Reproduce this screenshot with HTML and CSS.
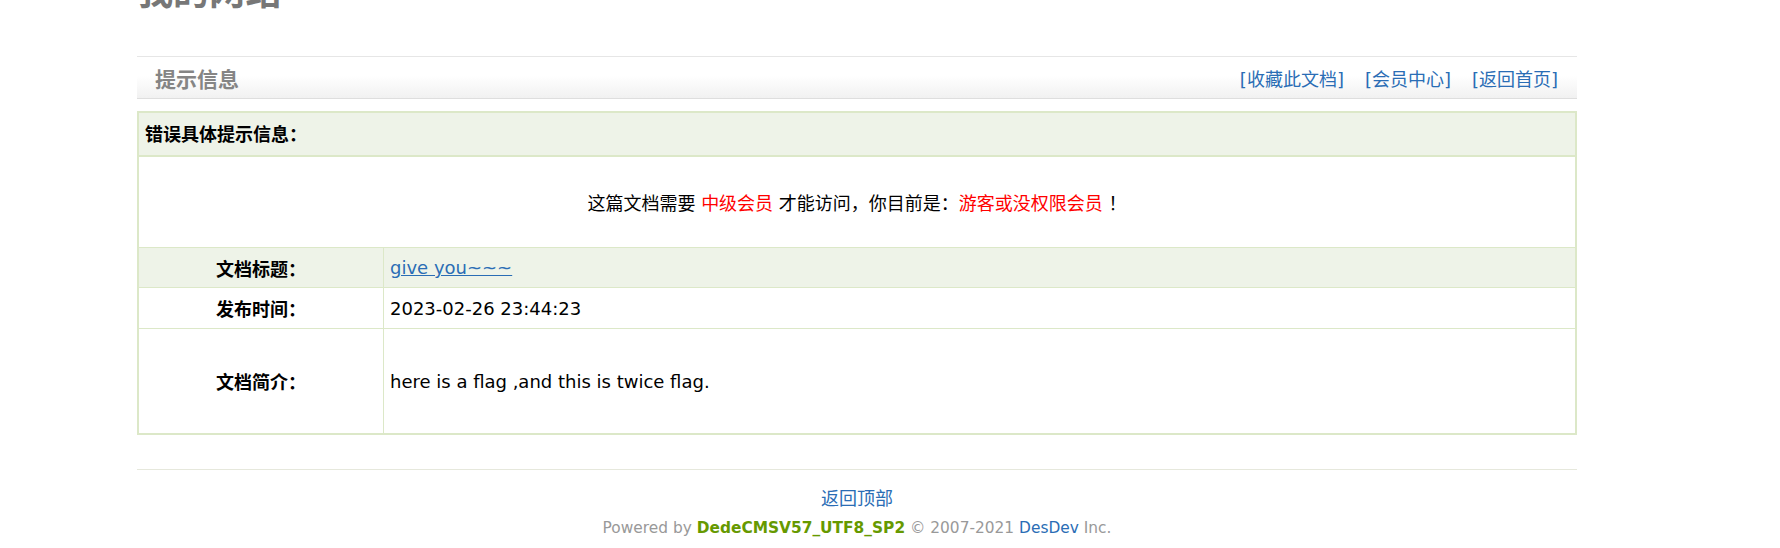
FILE: index.html
```html
<!DOCTYPE html>
<html lang="zh-CN">
<head>
<meta charset="utf-8">
<title>提示信息 - 我的网站</title>
<link rel="stylesheet" href="styles.css">
</head>
<body>
<div class="page">
  <h1 class="site-title">我的网站</h1>
  <div class="bar">
    <strong class="bar-title">提示信息</strong>
    <nav class="bar-links">
      <a href="#">[收藏此文档]</a>
      <a href="#">[会员中心]</a>
      <a href="#">[返回首页]</a>
    </nav>
  </div>
  <table class="info">
    <tr class="head"><td colspan="2">错误具体提示信息：</td></tr>
    <tr class="msg"><td colspan="2">这篇文档需要 <span class="red">中级会员</span> 才能访问，你目前是：<span class="red">游客或没权限会员</span> ！</td></tr>
    <tr class="alt"><th>文档标题：</th><td><a href="#" class="ul">give you~~~</a></td></tr>
    <tr class="date"><th>发布时间：</th><td>2023-02-26 23:44:23</td></tr>
    <tr class="desc"><th>文档简介：</th><td>here is a flag ,and this is twice flag.</td></tr>
  </table>
  <div class="footer">
    <a href="#" class="top">返回顶部</a>
    <p class="powered">Powered by <a href="#" class="dede">DedeCMSV57_UTF8_SP2</a> © 2007-2021 <a href="#">DesDev</a> Inc.</p>
  </div>
</div>
</body>
</html>
```
FILE: styles.css
```css
html, body {
  margin: 0;
  padding: 0;
  background: #fff;
}
body {
  font-family: "DejaVu Sans", "Noto Sans CJK SC", sans-serif;
  font-size: 18px;
  color: #000;
}
a {
  color: #2a6db5;
  text-decoration: none;
}
.page {
  width: 1440px;
  margin: 0 0 0 137px;
}
.site-title {
  margin: -31px 0 0 0;
  height: 40px;
  line-height: 40px;
  font-size: 36px;
  font-weight: bold;
  color: #777;
  font-family: "Noto Sans CJK SC", sans-serif;
}
.bar {
  margin-top: 47px;
  height: 41px;
  border-top: 1px solid #e6e6e6;
  border-bottom: 1px solid #dedede;
  background: linear-gradient(#fff 45%, #f1f1f1);
  display: flex;
  align-items: center;
  justify-content: space-between;
  padding: 0 19px 0 18px;
}
.bar-title {
  font-family: "Noto Sans CJK SC", sans-serif;
  font-size: 21px;
  color: #858585;
}
.bar-links {
  display: flex;
  gap: 21px;
}
.bar-links a {
  font-size: 18px;
}
.info {
  margin-top: 12px;
  width: 100%;
  border-collapse: collapse;
  border: 2px solid #dce8c8;
}
.info td, .info th {
  border: 1px solid #dce8c8;
  padding: 0 6px;
}
.info th {
  width: 232px;
  text-align: center;
  font-weight: bold;
}
.head td {
  height: 40px;
  padding-bottom: 2px;
  background: #eef3e8;
  font-weight: bold;
  border-bottom-width: 2px;
}
.msg td {
  height: 90px;
  text-align: center;
}
.alt th, .alt td {
  height: 39px;
  background: #eef3e8;
}
.date th, .date td {
  height: 40px;
}
.desc th, .desc td {
  height: 104px;
}
.red {
  color: #ff0000;
}
a.ul {
  text-decoration: underline;
}
.footer {
  margin-top: 34px;
  border-top: 1px solid #e6e8dc;
  text-align: center;
  padding-top: 14px;
}
.top {
  font-size: 18px;
}
.powered {
  margin: 9px 0 0 0;
  font-size: 15.4px;
  color: #999;
}
.dede {
  color: #669900;
  font-weight: bold;
}
```
